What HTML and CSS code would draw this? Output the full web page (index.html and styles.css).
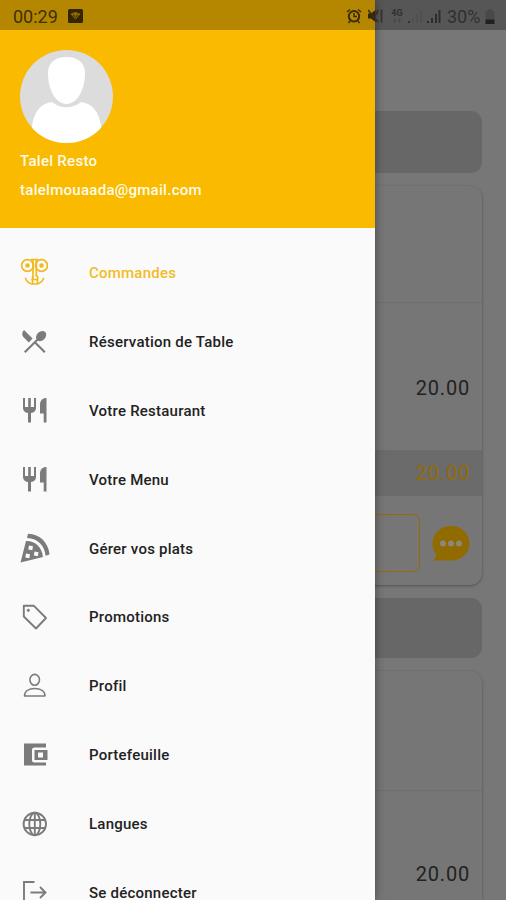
FILE: index.html
```html
<!DOCTYPE html>
<html lang="fr">
<head>
<meta charset="utf-8">
<title>Commandes</title>
<link rel="stylesheet" href="styles.css">
</head>
<body>
<div class="app">
  <main class="orders">
    <div class="order-bar"></div>
    <section class="order">
      <div class="order-head"></div>
      <div class="order-line"><span class="price">20.00</span></div>
      <div class="order-total"><span class="price">20.00</span></div>
      <div class="order-actions">
        <div class="action-button"></div>
        <svg class="chat" viewBox="0 0 38 36"><path fill="#926b00" d="M19 0C29.500 0 37.500 7.500 37.500 17.500S29.500 34.500 19 34.500H1.500L4.500 29C2 26 .5 22 .5 17.500.5 7.500 8.500 0 19 0Z"/><g fill="#8b8779"><circle cx="11" cy="17.500" r="3"/><circle cx="19" cy="17.500" r="3"/><circle cx="27" cy="17.500" r="3"/></g></svg>
      </div>
    </section>
    <div class="order-bar second"></div>
    <section class="order next">
      <div class="order-head"></div>
      <div class="order-line"><span class="price">20.00</span></div>
    </section>
  </main>

  <aside class="drawer">
    <header class="account">
      <svg class="avatar" viewBox="0 0 93 93"><defs><clipPath id="round"><circle cx="46.500" cy="46.500" r="46.500"/></clipPath></defs><g clip-path="url(#round)"><path fill="#dcdcdc" d="M0 0h93v93H0z"/><path fill="#fff" d="M46.500 7C58 7 65 13 65 23C65 40 57 54 46.500 54S28 40 28 23C28 13 35 7 46.500 7ZM12 93V76C14 63 19 54 32 52C40 59 53 59 61 52C74 54 79 63 81 76V93Z"/></g></svg>
      <div class="name">Talel Resto</div>
      <div class="email">talelmouaada@gmail.com</div>
    </header>
    <nav class="menu">
      <a class="item active"><svg viewBox="0 0 28 28" fill="none" stroke="currentColor" stroke-width="1.700"><circle cx="7.500" cy="7.500" r="5.900"/><circle cx="21.500" cy="7.500" r="5.900"/><g fill="currentColor" stroke="none"><circle cx="7.500" cy="7.500" r="2.200"/><circle cx="21.500" cy="7.500" r="2.200"/></g><path d="M11.500 1.500h6M13 1.500V20M16.300 1.500V18M16.300 17.500c2 1 2 3 .5 4M12 21.500h5.500v4M12.500 19v6.500M5.500 20.500c1.500 3.500 4 5 6.500 5.500h5c2.500-.5 5-2 6.500-5.500" stroke-linecap="round"/></svg><span>Commandes</span></a>
      <a class="item"><svg viewBox="0 0 28 28" fill="currentColor"><path d="M4 3l8.600 8.600-3.800 3.800-5.500-5.500C1.600 8.200 2 4.800 4 3ZM18 13.800c1.800.8 4.300.3 6.200-1.600 2.300-2.300 2.700-5.500 1-7.200s-4.900-1.300-7.200 1c-1.900 1.900-2.400 4.400-1.600 6.200L4 24.600l1.500 1.500 9.300-9.300 9.300 9.300 1.500-1.500-9.300-9.300Z"/></svg><span>Réservation de Table</span></a>
      <a class="item"><svg viewBox="0 0 28 28" fill="currentColor"><path d="M3 2h2v9h3.200V2h2.600v9H14V2h2v10c0 3-2 4.700-5 5v9.500H8V17c-3-.3-5-2-5-5ZM26.500 2v24.500h-2.800V17.500H20V9C20 4.500 22.500 2 26.500 2Z"/></svg><span>Votre Restaurant</span></a>
      <a class="item"><svg viewBox="0 0 28 28" fill="currentColor"><path d="M3 2h2v9h3.200V2h2.600v9H14V2h2v10c0 3-2 4.700-5 5v9.500H8V17c-3-.3-5-2-5-5ZM26.500 2v24.500h-2.800V17.500H20V9C20 4.500 22.500 2 26.500 2Z"/></svg><span>Votre Menu</span></a>
      <a class="item pizza"><svg viewBox="0 0 30 30" fill="currentColor"><path fill-rule="evenodd" d="M6 8C15 7.500 22 14 23 24L.5 29.500ZM9 12.500l-.7 4 4 .7.700-4ZM6 20.500l-.7 4 4 .7.700-4ZM14.500 18.500l-.7 4 4 .7.700-4Z"/><path d="M8 .8C20 1 28.500 10 29.500 21.500l-4 1.200C25 13 18 5.500 7 5Z"/></svg><span>Gérer vos plats</span></a>
      <a class="item"><svg viewBox="0 0 28 28" fill="none" stroke="currentColor" stroke-width="1.900" stroke-linejoin="round"><path d="M3.800 2.800H14L26 15 16 25.500 3.800 13.500Z"/><circle cx="8.300" cy="7.300" r="1.100" fill="currentColor" stroke-width="1"/></svg><span>Promotions</span></a>
      <a class="item"><svg viewBox="0 0 28 28" fill="none" stroke="currentColor" stroke-width="1.600"><ellipse cx="14.700" cy="7.800" rx="4.800" ry="5.400"/><path d="M4.500 24C4.500 19 9 16.500 14.700 16.500S25 19 25 24Z" stroke-linejoin="round"/></svg><span>Profil</span></a>
      <a class="item"><svg viewBox="0 0 28 28" fill="currentColor"><path fill-rule="evenodd" d="M4 2.500h22v4H14.500q-2.500 0-2.500 2.500v10Q12 21.500 14.500 21.500H26v3H4ZM14.500 9H27.500v10h-13ZM18 11.500v5h5v-5Z"/></svg><span>Portefeuille</span></a>
      <a class="item"><svg viewBox="0 0 28 28" fill="none" stroke="currentColor" stroke-width="1.900"><circle cx="14.800" cy="14" r="11.200"/><ellipse cx="14.800" cy="14" rx="5.500" ry="11.200"/><path d="M4.300 10h21M4.300 18h21M14.800 3v22"/></svg><span>Langues</span></a>
      <a class="item"><svg viewBox="0 0 28 28" fill="none" stroke="currentColor" stroke-width="1.900"><path d="M14.500 4H4V24.500H14.500M10.500 14.500H25.500M20 9l5.500 5.500L20 20"/></svg><span>Se déconnecter</span></a>
    </nav>
  </aside>

  <div class="status">
    <span class="clock">00:29</span>
    <svg class="notice" viewBox="0 0 15 14"><rect width="15" height="14" rx="1.500" fill="#332500"/><path d="M2.500 5Q7.500 1.500 12.500 5L7.500 10.500Z" fill="#967301"/><path d="M4 7h7M5 4.500l2.500 5 2.500-5" fill="none" stroke="#443301" stroke-width=".7"/></svg>
    <div class="signals">
      <svg class="alarm" viewBox="0 0 16 16" fill="none" stroke="#3b2b00" stroke-width="2"><circle cx="8" cy="8.300" r="5.200"/><path d="M1 4l3-2.500M15 4l-3-2.500M8 5v3.500h3M4 13l-1.500 2M12 13l1.500 2" stroke-width="1.500"/></svg>
      <svg class="mute" viewBox="0 0 16 16"><path fill="#332604" d="M0 5.500h3L7.500 2v12L3 10.500H0Z"/><path d="M0 2l10 12M10 2l-2 5M13.500 1.500v13" fill="none" stroke="#33302b" stroke-width="1.700"/></svg>
      <span class="network"><b>4G</b><svg viewBox="0 0 10 5" fill="none" stroke="#494949"><path d="M2.500 0v4M1 2.500l1.500 2 1.500-2M7.500 5V1M6 2.500l1.500-2 1.500 2"/></svg></span>
      <svg class="bars weak" viewBox="0 0 15 14"><path fill="#333" d="M0 12h2v2H0z"/><path d="M4 9h2v5H4zM8 5h2v9H8zM12 1h2v13h-2z" fill="#505050"/></svg>
      <svg class="bars" viewBox="0 0 14 14"><path d="M0 12h2v2H0zM4 9h2v5H4zM8 5h2v9H8zM11.500 1h2v13h-2z" fill="#2c2c2c"/></svg>
      <span class="percent">30%</span>
      <svg class="battery" viewBox="0 0 10 15"><path fill="#494949" d="M3 0h4v2h2.500v9H.5V2H3z"/><path fill="#202020" d="M.5 10.500h9V15h-9z"/></svg>
    </div>
  </div>
</div>
</body>
</html>
```

FILE: styles.css
```css
* { box-sizing: border-box; }

body {
  margin: 0;
  font-family: Roboto, "Liberation Sans", sans-serif;
}

.app {
  position: relative;
  width: 506px;
  height: 900px;
  overflow: hidden;
  background: #777;
}

.orders { padding: 111px 24px 0; }

.order-bar {
  height: 62px;
  border-radius: 11px;
  background: #676767;
}

.order {
  height: 399px;
  margin: 13px 0;
  border-radius: 12px;
  background: #767676;
  box-shadow: 0 1px 3px rgba(0, 0, 0, .32);
  overflow: hidden;
}

.order.next { height: 430px; }
.order.next .order-head { height: 120px; }
.order.next .order-line { height: 143px; }

.order-bar.second { height: 60px; }

.order-head {
  height: 117px;
  border-bottom: 1px solid #6e6e6e;
}

.order-line {
  display: flex;
  align-items: center;
  justify-content: flex-end;
  height: 147px;
  padding: 22px 13px 0 0;
}

.price {
  color: #222;
  font-size: 20px;
  line-height: 24px;
  letter-spacing: .8px;
  margin-right: -1px;
}

.order-total {
  display: flex;
  align-items: center;
  justify-content: flex-end;
  height: 46px;
  padding-right: 13px;
  background: #6b6b6b;
}

.order-total .price { color: #926b08; }

.order-actions {
  display: flex;
  align-items: center;
  justify-content: flex-end;
  gap: 12px;
  height: 89px;
  padding: 6px 12px 0 0;
}

.action-button {
  width: 374px;
  height: 58px;
  margin-top: -2px;
  border: 1px solid #96690d;
  border-radius: 6px;
}

.chat { width: 38px; height: 36px; }

.drawer {
  position: absolute;
  inset: 0 auto 0 0;
  width: 375px;
  background: #fafafa;
  box-shadow: 0 0 9px rgba(0, 0, 0, .42);
  overflow: hidden;
}

.account {
  height: 228px;
  padding: 50px 20px 0;
  background: #f9ba00;
  color: #fffbea;
  font-size: 15px;
  font-weight: 500;
  line-height: 18px;
  letter-spacing: .28px;
}

.avatar {
  display: block;
  width: 93px;
  height: 93px;
}

.name { margin-top: 9px; }
.email { margin-top: 11px; }

.menu { padding-top: 10px; }

.item {
  display: flex;
  align-items: center;
  gap: 41px;
  height: 68.900px;
  padding-left: 20px;
  color: #222;
  font-size: 15px;
  font-weight: 500;
  letter-spacing: .23px;
}

.item span { padding-top: 1px; }

.item svg {
  width: 28px;
  height: 28px;
  color: #7b7b7b;
}

.item.pizza { gap: 39px; }
.item.pizza svg { width: 30px; height: 30px; }

.item.active { color: #f2bc25; }
.item.active svg { color: #f2b91b; }

.status {
  position: absolute;
  inset: 0 0 auto;
  display: flex;
  align-items: center;
  height: 30px;
  padding: 2px 11px 0 13px;
  background: rgba(0, 0, 0, .27);
  color: #403000;
  font-size: 18px;
}

.clock { width: 47px; white-space: nowrap; }

.notice {
  width: 15px;
  height: 14px;
  margin-left: 8px;
}

.signals {
  display: flex;
  align-items: center;
  margin-left: auto;
  color: #303030;
}

.alarm { width: 16px; height: 16px; }
.mute { width: 16px; height: 16px; margin-left: 6px; }

.network {
  display: flex;
  flex-direction: column;
  align-items: center;
  width: 14px;
  margin: 0 4px 0 6px;
  font-size: 9px;
  line-height: 9px;
}

.network svg { width: 10px; height: 5px; }

.bars { width: 14px; height: 14px; margin-right: 6px; }
.bars.weak { width: 15px; margin-right: 4px; }
.percent { width: 34px; white-space: nowrap; }
.battery { width: 10px; height: 15px; margin-left: 4px; }
```
